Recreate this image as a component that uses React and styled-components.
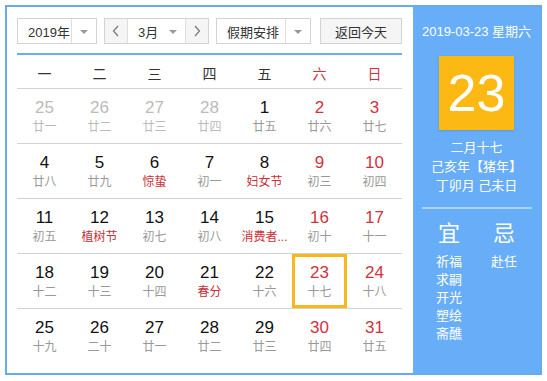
import React from "react";
import styled, { createGlobalStyle } from "styled-components";

const Global = createGlobalStyle`
  html, body { margin: 0; padding: 0; background: #fff; }
  body { font-family: "Liberation Sans", Arial, "Noto Sans CJK SC", sans-serif; }
`;

const BLUE = "#67adf7";
const RED = "#d2323d";

const Frame = styled.div`
  margin: 5px;
  width: 537px;
  height: 370px;
  box-sizing: border-box;
  border: 2px solid #66aaf0;
  display: flex;
`;

const Left = styled.div`
  width: 406px;
  box-sizing: border-box;
  padding: 11px 0 0 10px;
`;

const Toolbar = styled.div`
  display: flex;
  width: 385px;
  height: 26px;
  gap: 7px;
  font-size: 13px;
  color: #333;
`;

const Select = styled.div`
  display: flex;
  width: ${(p) => p.$w}px;
  height: 26px;
  box-sizing: border-box;
  border: 1px solid #d3d3d3;
  background: #fff;
`;

const SelectText = styled.div`
  flex: 1;
  display: flex;
  align-items: center;
  padding-left: 10px;
`;

const ArrowCell = styled.div`
  width: 24px;
  display: flex;
  align-items: center;
  justify-content: center;
  border-left: ${(p) => (p.$divided ? "1px solid #dedede" : "none")};
  &::after {
    content: "";
    border-left: 4px solid transparent;
    border-right: 4px solid transparent;
    border-top: 4px solid #999;
    margin-top: 1px;
  }
`;

const StepButton = styled.div`
  width: 22px;
  display: flex;
  align-items: center;
  justify-content: center;
  background: #f5f5f5;
  border-left: ${(p) => (p.$side === "right" ? "1px solid #dedede" : "none")};
  border-right: ${(p) => (p.$side === "left" ? "1px solid #dedede" : "none")};
`;

const TodayButton = styled.div`
  margin-left: 2px;
  width: 82px;
  height: 26px;
  box-sizing: border-box;
  border: 1px solid #d3d3d3;
  background: #f5f5f5;
  display: flex;
  align-items: center;
  justify-content: center;
`;

const Rule = styled.div`
  width: 385px;
  height: 2px;
  margin-top: 9px;
  background: #6aaef5;
`;

const Grid = styled.div`
  width: 385px;
  display: grid;
  grid-template-columns: repeat(7, 55px);
`;

const Header = styled(Grid)`
  height: 34px;
  border-bottom: 1px solid #d2d2d2;
  box-sizing: border-box;
  align-items: center;
  font-size: 14px;
`;

const HeadCell = styled.div`
  text-align: center;
  color: ${(p) => (p.$weekend ? RED : "#333")};
  padding-top: 2px;
`;

const Row = styled(Grid)`
  height: 55px;
  box-sizing: border-box;
  border-bottom: ${(p) => (p.$last ? "none" : "1px solid #d2d2d2")};
`;

const Cell = styled.div`
  height: 54px;
  box-sizing: border-box;
  padding-top: 9px;
  display: flex;
  flex-direction: column;
  align-items: center;
  box-shadow: ${(p) => (p.$selected ? "inset 0 0 0 3px #f8b71a" : "none")};
`;

const DayNum = styled.div`
  font-size: 17px;
  line-height: 20px;
  color: ${(p) => (p.$faded ? "#bbb" : p.$weekend ? RED : "#111")};
`;

const Lunar = styled.div`
  font-size: 12px;
  line-height: 18px;
  white-space: nowrap;
  color: ${(p) => (p.$festival ? "#cc2e36" : p.$faded ? "#bbb" : "#999")};
`;

const Right = styled.div`
  flex: 1;
  background: ${BLUE};
  color: #fff;
  display: flex;
  flex-direction: column;
  align-items: center;
  padding-top: 15px;
  box-sizing: border-box;
`;

const DateLine = styled.div`
  font-size: 13px;
  line-height: 20px;
`;

const BigDay = styled.div`
  margin-top: 14px;
  width: 75px;
  height: 74px;
  background: #fdb913;
  box-shadow: 0 1px 2px rgba(0, 0, 0, 0.12);
  display: flex;
  align-items: center;
  justify-content: center;
  font-size: 52px;
  line-height: 1;
`;

const LunarInfo = styled.div`
  margin-top: 8px;
  font-size: 13px;
  line-height: 19px;
  text-align: center;
`;

const Separator = styled.div`
  margin-top: 12px;
  width: 110px;
  height: 2px;
  background: rgba(255, 255, 255, 0.45);
`;

const YiJi = styled.div`
  margin-top: 13px;
  display: grid;
  grid-template-columns: 55px 55px;
  text-align: center;
`;

const YiJiHead = styled.div`
  font-size: 22px;
  line-height: 24px;
`;

const YiJiList = styled.div`
  margin-top: 7px;
  font-size: 13px;
  line-height: 18px;
`;

const Chevron = ({ dir }) => (
  <svg width="8" height="12" viewBox="0 0 8 12">
    <polyline
      points={dir === "left" ? "6,1 1.5,6 6,11" : "2,1 6.5,6 2,11"}
      fill="none"
      stroke="#777"
      strokeWidth="1.2"
    />
  </svg>
);

const weeks = [
  [["25", "廿一", 0, 1], ["26", "廿二", 0, 1], ["27", "廿三", 0, 1], ["28", "廿四", 0, 1], ["1", "廿五"], ["2", "廿六"], ["3", "廿七"]],
  [["4", "廿八"], ["5", "廿九"], ["6", "惊蛰", 1], ["7", "初一"], ["8", "妇女节", 1], ["9", "初三"], ["10", "初四"]],
  [["11", "初五"], ["12", "植树节", 1], ["13", "初七"], ["14", "初八"], ["15", "消费者...", 1], ["16", "初十"], ["17", "十一"]],
  [["18", "十二"], ["19", "十三"], ["20", "十四"], ["21", "春分", 1], ["22", "十六"], ["23", "十七", 0, 0, 1], ["24", "十八"]],
  [["25", "十九"], ["26", "二十"], ["27", "廿一"], ["28", "廿二"], ["29", "廿三"], ["30", "廿四"], ["31", "廿五"]],
];

const heads = ["一", "二", "三", "四", "五", "六", "日"];

export default function App() {
  return (
    <>
      <Global />
      <Frame>
        <Left>
          <Toolbar>
            <Select $w={80}>
              <SelectText>2019年</SelectText>
              <ArrowCell $divided />
            </Select>
            <Select $w={105}>
              <StepButton $side="left">
                <Chevron dir="left" />
              </StepButton>
              <SelectText>3月</SelectText>
              <ArrowCell />
              <StepButton $side="right">
                <Chevron dir="right" />
              </StepButton>
            </Select>
            <Select $w={95}>
              <SelectText>假期安排</SelectText>
              <ArrowCell $divided />
            </Select>
            <TodayButton>返回今天</TodayButton>
          </Toolbar>
          <Rule />
          <Header>
            {heads.map((h, i) => (
              <HeadCell key={h} $weekend={i >= 5}>
                {h}
              </HeadCell>
            ))}
          </Header>
          {weeks.map((week, r) => (
            <Row key={r} $last={r === weeks.length - 1}>
              {week.map(([d, l, fest, faded, sel], c) => (
                <Cell key={c} $selected={!!sel}>
                  <DayNum $faded={!!faded} $weekend={c >= 5}>
                    {d}
                  </DayNum>
                  <Lunar $festival={!!fest} $faded={!!faded}>
                    {l}
                  </Lunar>
                </Cell>
              ))}
            </Row>
          ))}
        </Left>
        <Right>
          <DateLine>2019-03-23 星期六</DateLine>
          <BigDay>23</BigDay>
          <LunarInfo>
            <div>二月十七</div>
            <div>己亥年【猪年】</div>
            <div>丁卯月 己未日</div>
          </LunarInfo>
          <Separator />
          <YiJi>
            <div>
              <YiJiHead>宜</YiJiHead>
              <YiJiList>
                <div>祈福</div>
                <div>求嗣</div>
                <div>开光</div>
                <div>塑绘</div>
                <div>斋醮</div>
              </YiJiList>
            </div>
            <div>
              <YiJiHead>忌</YiJiHead>
              <YiJiList>
                <div>赴任</div>
              </YiJiList>
            </div>
          </YiJi>
        </Right>
      </Frame>
    </>
  );
}
